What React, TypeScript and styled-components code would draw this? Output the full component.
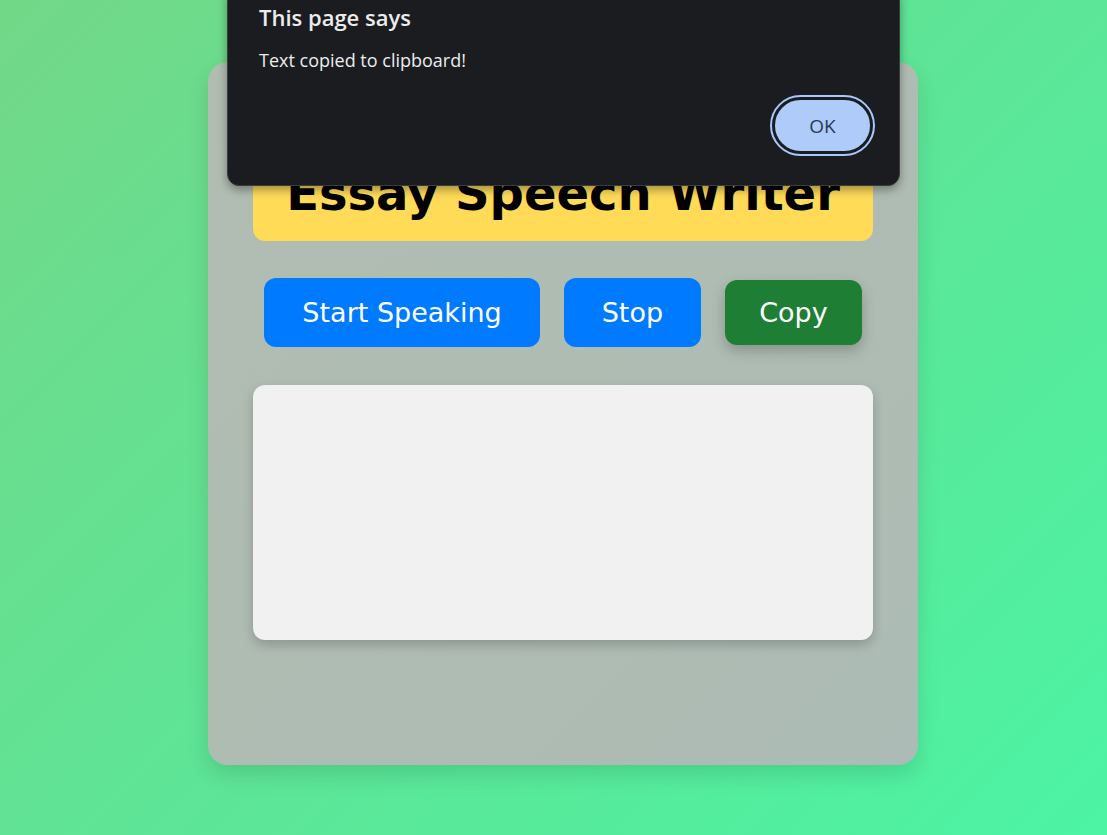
import React from 'react';
import styled, { createGlobalStyle } from 'styled-components';

const GlobalStyle = createGlobalStyle`
  html, body {
    margin: 0;
    padding: 0;
  }
  body {
    font-family: 'DejaVu Sans', Verdana, sans-serif;
    overflow: hidden;
  }
`;

const Page = styled.div`
  position: relative;
  width: 1107px;
  height: 835px;
  box-sizing: border-box;
  padding: 62px 189px 0 208px;
  background: linear-gradient(135deg, #72d888 0%, #5ee496 50%, #4cf4a4 100%);
`;

const Card = styled.div`
  width: 710px;
  height: 703px;
  box-sizing: border-box;
  padding: 83px 45px 0;
  border-radius: 20px;
  background: linear-gradient(135deg, #b1bdb1 0%, #afbcb3 60%, #acbbb5 100%);
  box-shadow: 0 10px 22px rgba(0, 0, 0, 0.12);
  display: flex;
  flex-direction: column;
`;

const TitleBox = styled.h1`
  margin: 0;
  padding: 20px 0;
  border-radius: 12px;
  background: #ffdb58;
  color: #000;
  text-align: center;
  font-size: 48px;
  font-weight: bold;
  line-height: 56px;
`;

const ButtonRow = styled.div`
  display: flex;
  align-items: center;
  justify-content: center;
  gap: 24px;
  margin-top: 37px;
`;

const ActionButton = styled.button<{ $tone: 'blue' | 'green'; $pressed?: boolean }>`
  border: none;
  border-radius: 12px;
  height: ${(p) => (p.$pressed ? '65px' : '69px')};
  padding: 0 ${(p) => (p.$pressed ? '34px' : '38px')};
  background: ${(p) => (p.$tone === 'green' ? '#1e7e34' : '#007bff')};
  color: #fff;
  font-family: 'DejaVu Sans', Verdana, sans-serif;
  font-size: 27px;
  box-shadow: ${(p) => (p.$pressed ? '0 6px 14px rgba(0, 0, 0, 0.22)' : 'none')};
  cursor: pointer;
`;

const Output = styled.div`
  margin-top: 38px;
  height: 255px;
  border-radius: 12px;
  background: #f0f1f0;
  box-shadow: 0 5px 12px rgba(0, 0, 0, 0.2);
`;

const Dialog = styled.div`
  position: absolute;
  left: 227px;
  top: -14px;
  width: 673px;
  height: 200px;
  box-sizing: border-box;
  padding: 15px 24px 0 31px;
  border-radius: 12px;
  background: #1b1c20;
  box-shadow: 0 4px 10px rgba(0, 0, 0, 0.35);
  border: 1px solid #3a3c40;
  font-family: 'Open Sans', 'Noto Sans', sans-serif;
  color: #ececec;
`;

const DialogTitle = styled.div`
  font-size: 22px;
  font-weight: 600;
  line-height: 30px;
`;

const DialogText = styled.div`
  margin-top: 16px;
  font-size: 18px;
  line-height: 25px;
`;

const DialogFooter = styled.div`
  display: flex;
  justify-content: flex-end;
  margin-top: 24px;
  padding-right: 2px;
`;

const OkButton = styled.button`
  width: 101px;
  height: 57px;
  border-radius: 29px;
  border: 3px solid #1b1c20;
  outline: 2px solid #a8c7fa;
  background: #aecbfa;
  color: #2a3a52;
  font-family: 'Open Sans', 'Noto Sans', sans-serif;
  font-size: 19px;
`;

const App: React.FC = () => {
  return (
    <Page>
      <GlobalStyle />
      <Card>
        <TitleBox>Essay Speech Writer</TitleBox>
        <ButtonRow>
          <ActionButton $tone="blue">Start Speaking</ActionButton>
          <ActionButton $tone="blue">Stop</ActionButton>
          <ActionButton $tone="green" $pressed>
            Copy
          </ActionButton>
        </ButtonRow>
        <Output />
      </Card>
      <Dialog>
        <DialogTitle>This page says</DialogTitle>
        <DialogText>Text copied to clipboard!</DialogText>
        <DialogFooter>
          <OkButton>OK</OkButton>
        </DialogFooter>
      </Dialog>
    </Page>
  );
};

export default App;
